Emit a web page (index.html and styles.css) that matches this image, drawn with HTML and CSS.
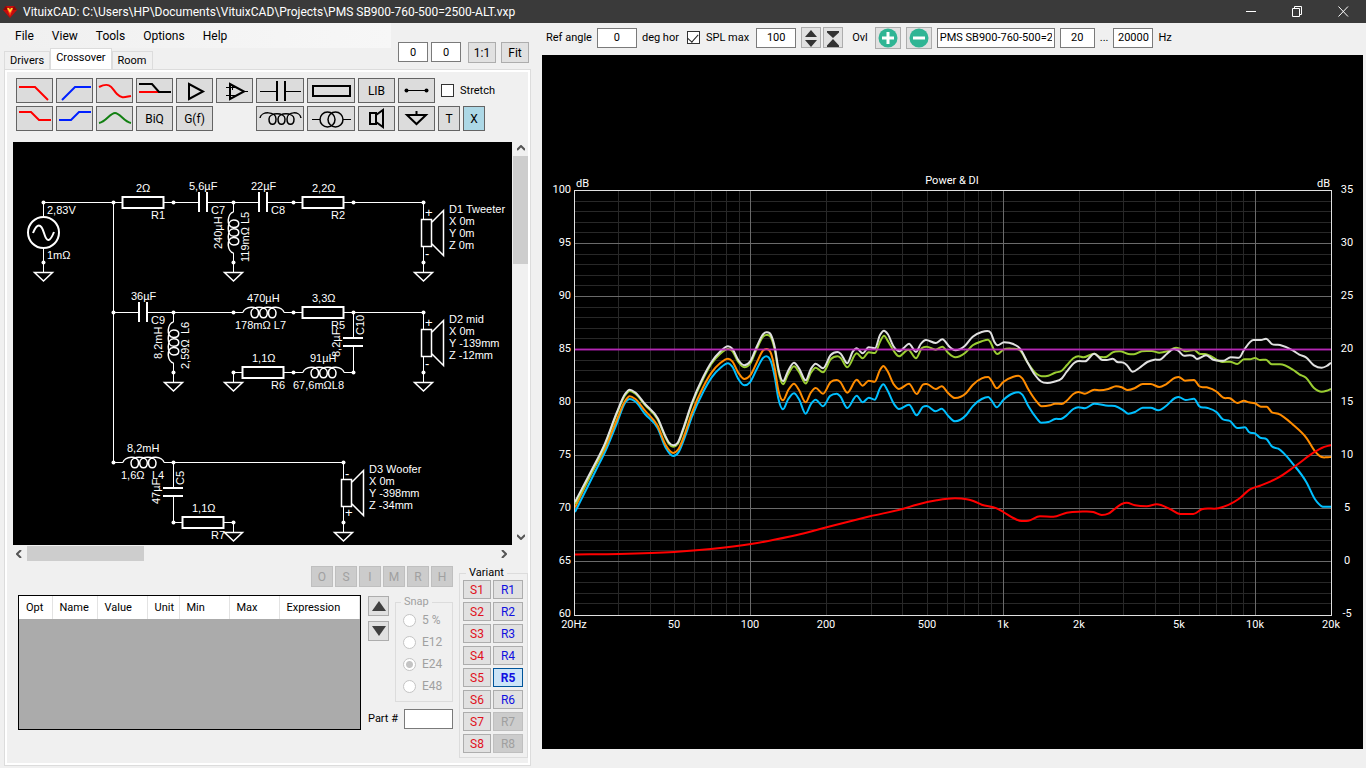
FILE: index.html
```html
<!DOCTYPE html>
<html lang="en">
<head>
<meta charset="utf-8">
<title>VituixCAD</title>
<link rel="stylesheet" href="styles.css">
</head>
<body>
<div class="app">
  <header class="titlebar">
    <svg class="logo" viewBox="0 0 14 12" aria-hidden="true">
      <path d="M3 0H11L14 4L7 12L0 4Z" fill="#c40c0c"/>
      <path d="M0 4L3 0L5 4ZM14 4L11 0L9 4Z" fill="#8d0505"/>
      <path d="M4 3H10L7 10Z" fill="#ff3b1f"/>
      <path d="M4 2H6L7 4L8 2H10L7 7Z" fill="#ffd92e"/>
    </svg>
    <h1 class="title">VituixCAD: C:\Users\HP\Documents\VituixCAD\Projects\PMS SB900-760-500=2500-ALT.vxp</h1>
    <div class="window-buttons">
      <button type="button" aria-label="Minimize"><svg viewBox="0 0 11 11"><path d="M0 5.5H10"/></svg></button>
      <button type="button" aria-label="Restore"><svg viewBox="0 0 11 11"><path d="M.5 2.5H7.5V10.500H.5ZM2.500 2.500V.5H9.500V8.500H7.500"/></svg></button>
      <button type="button" aria-label="Close"><svg viewBox="0 0 11 11"><path d="M.5 .5L10 10.500M10 .5L.5 10.500"/></svg></button>
    </div>
  </header>

  <div class="workspace">
    <section class="editor">
      <div class="editor-head">
        <div class="nav">
          <nav class="menu">
            <button type="button">File</button>
            <button type="button">View</button>
            <button type="button">Tools</button>
            <button type="button">Options</button>
            <button type="button">Help</button>
          </nav>
          <div class="tabs" role="tablist">
            <button type="button" role="tab" class="tab">Drivers</button>
            <button type="button" role="tab" class="tab active" aria-selected="true">Crossover</button>
            <button type="button" role="tab" class="tab">Room</button>
          </div>
        </div>
        <div class="view-tools">
          <div class="offsets">
            <input class="field offset" type="text" value="0" aria-label="Horizontal offset">
            <input class="field offset" type="text" value="0" aria-label="Vertical offset">
          </div>
          <div class="zooms">
            <button type="button" class="btn view-btn">1:1</button>
            <button type="button" class="btn view-btn">Fit</button>
          </div>
        </div>
      </div>

      <div class="panel">
        <div class="parts">
          <div class="parts-row">
            <button type="button" class="part" aria-label="Low pass"><svg viewBox="0 0 35 23"><path class="red" d="M2 8H18L31 21"/></svg></button>
            <button type="button" class="part" aria-label="High pass"><svg viewBox="0 0 35 23"><path class="blue" d="M5 21L18 8H34"/></svg></button>
            <button type="button" class="part" aria-label="All pass"><svg viewBox="0 0 35 23"><path class="red" d="M2 8C14 2 15 10 20 15C25 20 28 18 34 17"/></svg></button>
            <button type="button" class="part" aria-label="Shelf low pass"><svg viewBox="0 0 35 23"><path class="red" d="M2 13H23"/><path class="ink" d="M2 5H15L22 13H34"/></svg></button>
            <button type="button" class="part" aria-label="Buffer"><svg viewBox="0 0 35 23"><path class="ink" d="M12 5V20L26 12.500Z"/></svg></button>
            <button type="button" class="part" aria-label="Operational amplifier"><svg viewBox="0 0 35 23"><path class="ink" d="M13 5V20L27 12.500Z"/><path class="thin" d="M9 8.500H18M9 16.500H18M15.500 6V11M27 12.500H31"/></svg></button>
            <button type="button" class="part wide" aria-label="Capacitor"><svg viewBox="0 0 46 23"><path class="thin" d="M3 12.500H20M28 12.500H44"/><path class="ink" d="M20 2V22M28 2V22"/></svg></button>
            <button type="button" class="part wide" aria-label="Resistor"><svg viewBox="0 0 46 23"><path class="ink" d="M5 7H42V17H5Z"/></svg></button>
            <button type="button" class="part">LIB</button>
            <button type="button" class="part" aria-label="Wire"><svg viewBox="0 0 35 23"><path class="thin" d="M7 11.500H27"/><circle cx="7.500" cy="11.500" r="2"/><circle cx="27.500" cy="11.500" r="2"/></svg></button>
            <label class="check stretch"><input type="checkbox"> Stretch</label>
          </div>
          <div class="parts-row">
            <button type="button" class="part" aria-label="Low shelf"><svg viewBox="0 0 35 23"><path class="red" d="M2 5H14L22 13H34"/></svg></button>
            <button type="button" class="part" aria-label="High shelf"><svg viewBox="0 0 35 23"><path class="blue" d="M2 13H14L22 5H34"/></svg></button>
            <button type="button" class="part" aria-label="Peak"><svg viewBox="0 0 35 23"><path class="green" d="M2 16C9 15 13 6 18 6C23 6 27 15 34 16"/></svg></button>
            <button type="button" class="part">BiQ</button>
            <button type="button" class="part">G(f)</button>
            <span class="part-gap"></span>
            <button type="button" class="part wide" aria-label="Inductor"><svg viewBox="0 0 46 23"><path class="ink coil-icon" d="M3 11C4 4 19 4 19 12C19 19 12 19 12 12C12 5 28 5 28 12C28 19 21 19 21 12C21 5 37 5 37 12C37 19 30 19 30 12C30 4 43 4 44 11"/></svg></button>
            <button type="button" class="part wide" aria-label="Transformer"><svg viewBox="0 0 46 23"><path class="thin" d="M4 12.500H12M35 12.500H43"/><circle class="ring" cx="19.500" cy="12.500" r="7.500"/><circle class="ring" cx="27.500" cy="12.500" r="7.500"/></svg></button>
            <button type="button" class="part" aria-label="Loudspeaker"><svg viewBox="0 0 35 23"><path class="ink" d="M11 6H17V17H11ZM17 8L24 3V20L17 15"/></svg></button>
            <button type="button" class="part" aria-label="Ground"><svg viewBox="0 0 35 23"><path class="ink" d="M8 8H27L17.500 17ZM17.500 4V8"/></svg></button>
            <button type="button" class="part narrow">T</button>
            <button type="button" class="part narrow on">X</button>
          </div>
        </div>

        <div class="canvas-frame">
          <svg class="schematic" viewBox="13 142 499 403" role="img" aria-label="Crossover schematic">
            <defs>
              <g id="coil"><path class="symbol" d="M0 0C1 -6 15.500 -8 15.500 0C15.500 7 8 7 8 0C8 -7 24.300 -7 24.300 0C24.300 7 16.700 7 16.700 0C16.700 -7 33 -7 33 0C33 7 25.500 7 25.500 0C25.500 -8 40 -6 41 0"/></g>
              <g id="ground"><path d="M0 0V9.500"/><path class="symbol" d="M-9 10H9L0 18.500Z"/><circle r="2"/></g>
              <g id="resistor"><path class="bold" d="M0 -5.500H41V5.500H0Z"/></g>
              <g id="capacitor"><path class="bold" d="M0 -10V10M8 -10V10"/></g>
              <g id="driver"><path d="M0 0V17M0 44V60"/><path class="symbol" d="M-2 17H8V44H-2ZM8 20L20 8V53L8 41"/><circle r="2"/></g>
            </defs>
            <g class="wires">
              <path d="M43.500 217V202.500H122M164 202.500H199M207 202.500H259M267 202.500H302M344 202.500H423.500"/>
              <path d="M113.500 202.500V462.500H123M164 462.500H343.500"/>
              <path d="M43.500 248V262M233.500 202.500V212M233.500 253V262"/>
              <path d="M113.500 312.500H139M147 312.500H243M284 312.500H302M344 312.500H423.500"/>
              <path d="M173.500 312.500V322M173.500 363V372M353.500 312.500V338M353.500 346V372.500H344M303 372.500H284M243 372.500H233.500"/>
              <path d="M173.500 462.500V488M173.500 496V522.500H182M224 522.500H233.500"/>
              <circle class="bold" cx="43.500" cy="232.500" r="15.500"/>
              <path class="bold" d="M33 233C37 223 41 223 44 233S50 242 54 232"/>
              <use href="#coil" transform="translate(233.500 253) rotate(-90)"/>
              <use href="#coil" transform="translate(173.500 363) rotate(-90)"/>
              <use href="#coil" x="243" y="312.500"/>
              <use href="#coil" x="303" y="372.500"/>
              <use href="#coil" x="123" y="462.500"/>
              <use href="#resistor" x="122.500" y="202.500"/>
              <use href="#resistor" x="302.500" y="202.500"/>
              <use href="#resistor" x="302.500" y="312.500"/>
              <use href="#resistor" x="242.500" y="372.500"/>
              <use href="#resistor" x="182.500" y="522.500"/>
              <use href="#capacitor" x="199" y="202"/>
              <use href="#capacitor" x="259" y="202"/>
              <use href="#capacitor" x="139" y="312"/>
              <use href="#capacitor" transform="translate(353 338) rotate(90) scale(1 -1)"/>
              <use href="#capacitor" transform="translate(173 488) rotate(90) scale(1 -1)"/>
              <use href="#driver" x="423.500" y="202.500"/>
              <use href="#driver" x="423.500" y="312.500"/>
              <use href="#driver" x="343.500" y="462.500"/>
              <use href="#ground" x="43.500" y="262.500"/>
              <use href="#ground" x="233.500" y="262.500"/>
              <use href="#ground" x="173.500" y="372.500"/>
              <use href="#ground" x="233.500" y="372.500"/>
              <use href="#ground" x="423.500" y="262.500"/>
              <use href="#ground" x="423.500" y="372.500"/>
              <use href="#ground" x="233.500" y="522.500"/>
              <use href="#ground" x="343.500" y="522.500"/>
              <circle cx="43.500" cy="202.500" r="2"/><circle cx="113.500" cy="202.500" r="2"/>
              <circle cx="173.500" cy="202.500" r="2"/><circle cx="233.500" cy="202.500" r="2"/>
              <circle cx="293.500" cy="202.500" r="2"/><circle cx="353.500" cy="202.500" r="2"/>
              <circle cx="113.500" cy="312.500" r="2"/><circle cx="173.500" cy="312.500" r="2"/>
              <circle cx="233.500" cy="312.500" r="2"/><circle cx="293.500" cy="312.500" r="2"/>
              <circle cx="353.500" cy="312.500" r="2"/><circle cx="293.500" cy="372.500" r="2"/>
              <circle cx="353.500" cy="372.500" r="2"/><circle cx="113.500" cy="462.500" r="2"/>
              <circle cx="173.500" cy="462.500" r="2"/><circle cx="173.500" cy="522.500" r="2"/>
            </g>
            <g class="part-labels">
              <text x="47" y="214">2,83V</text><text x="47" y="259">1mΩ</text>
              <text x="136" y="192">2Ω</text><text x="151" y="219">R1</text>
              <text x="189" y="190">5,6µF</text><text x="211" y="214">C7</text>
              <text x="251" y="190">22µF</text><text x="271" y="214">C8</text>
              <text x="312" y="192">2,2Ω</text><text x="331" y="219">R2</text>
              <text x="131" y="300">36µF</text><text x="151" y="324">C9</text>
              <text x="247" y="302">470µH</text><text x="235" y="329">178mΩ L7</text>
              <text x="312" y="302">3,3Ω</text><text x="331" y="329">R5</text>
              <text x="252" y="362">1,1Ω</text><text x="271" y="389">R6</text>
              <text x="310" y="362">91µH</text><text x="293" y="389">67,6mΩL8</text>
              <text x="127" y="452">8,2mH</text><text x="121" y="479">1,6Ω</text><text x="152" y="479">L4</text>
              <text x="192" y="512">1,1Ω</text><text x="211" y="539">R7</text>
              <text class="sign" x="425" y="217">+</text><text class="sign" x="425" y="258">-</text>
              <text class="sign" x="425" y="327">+</text><text class="sign" x="425" y="368">-</text>
              <text class="sign" x="345" y="478">-</text><text class="sign" x="345" y="517">+</text>
              <text transform="translate(222 249) rotate(-90)">240µH</text>
              <text transform="translate(249 262) rotate(-90)">119mΩ L5</text>
              <text transform="translate(162 359) rotate(-90)">8,2mH</text>
              <text transform="translate(189 369) rotate(-90)">2,59Ω</text>
              <text transform="translate(189 334) rotate(-90)">L6</text>
              <text transform="translate(364 335) rotate(-90)">C10</text>
              <text transform="translate(340 357) rotate(-90)">8,2µF</text>
              <text transform="translate(184 485) rotate(-90)">C5</text>
              <text transform="translate(160 504) rotate(-90)">47µF</text>
              <text><tspan x="449" y="213">D1 Tweeter</tspan><tspan x="449" dy="12">X 0m</tspan><tspan x="449" dy="12">Y 0m</tspan><tspan x="449" dy="12">Z 0m</tspan></text>
              <text><tspan x="449" y="323">D2 mid</tspan><tspan x="449" dy="12">X 0m</tspan><tspan x="449" dy="12">Y -139mm</tspan><tspan x="449" dy="12">Z -12mm</tspan></text>
              <text><tspan x="369" y="473">D3 Woofer</tspan><tspan x="369" dy="12">X 0m</tspan><tspan x="369" dy="12">Y -398mm</tspan><tspan x="369" dy="12">Z -34mm</tspan></text>
            </g>
          </svg>
          <div class="scroll vertical">
            <svg viewBox="0 0 8 6"><path d="M0 5L4 1L8 5"/></svg>
            <span class="thumb"></span>
            <svg viewBox="0 0 8 6"><path d="M0 1L4 5L8 1"/></svg>
          </div>
          <div class="scroll horizontal">
            <svg viewBox="0 0 6 8"><path d="M5 0L1 4L5 8"/></svg>
            <span class="thumb"></span>
            <svg viewBox="0 0 6 8"><path d="M1 0L5 4L1 8"/></svg>
          </div>
        </div>

        <div class="details">
          <div class="details-main">
            <div class="modes">
              <button type="button" class="btn" disabled>O</button>
              <button type="button" class="btn" disabled>S</button>
              <button type="button" class="btn" disabled>I</button>
              <button type="button" class="btn" disabled>M</button>
              <button type="button" class="btn" disabled>R</button>
              <button type="button" class="btn" disabled>H</button>
            </div>
            <div class="values">
              <div class="table-wrap">
                <table>
                  <colgroup><col class="c-opt"><col class="c-name"><col class="c-value"><col class="c-unit"><col class="c-min"><col class="c-max"><col></colgroup>
                  <thead><tr><th>Opt</th><th>Name</th><th>Value</th><th>Unit</th><th>Min</th><th>Max</th><th>Expression</th></tr></thead>
                </table>
              </div>
              <div class="side">
                <div class="side-top">
                  <div class="arrows">
                    <button type="button" class="btn" aria-label="Move up"><svg viewBox="0 0 14 12"><path d="M0 11L7 1L14 11Z"/></svg></button>
                    <button type="button" class="btn" aria-label="Move down"><svg viewBox="0 0 14 12"><path d="M0 1L7 11L14 1Z"/></svg></button>
                  </div>
                  <fieldset class="snap" disabled>
                    <legend>Snap</legend>
                    <label><input type="radio" name="snap">5 %</label>
                    <label><input type="radio" name="snap">E12</label>
                    <label><input type="radio" name="snap" checked>E24</label>
                    <label><input type="radio" name="snap">E48</label>
                  </fieldset>
                </div>
                <div class="part-number">
                  <label for="partno">Part #</label>
                  <input id="partno" class="field" type="text">
                </div>
              </div>
            </div>
          </div>
          <fieldset class="variant">
            <legend>Variant</legend>
            <div class="variant-grid">
              <button type="button" class="btn s">S1</button><button type="button" class="btn r">R1</button>
              <button type="button" class="btn s">S2</button><button type="button" class="btn r">R2</button>
              <button type="button" class="btn s">S3</button><button type="button" class="btn r">R3</button>
              <button type="button" class="btn s">S4</button><button type="button" class="btn r">R4</button>
              <button type="button" class="btn s">S5</button><button type="button" class="btn r current">R5</button>
              <button type="button" class="btn s">S6</button><button type="button" class="btn r">R6</button>
              <button type="button" class="btn s">S7</button><button type="button" class="btn r" disabled>R7</button>
              <button type="button" class="btn s">S8</button><button type="button" class="btn r" disabled>R8</button>
            </div>
          </fieldset>
        </div>
      </div>
    </section>

    <section class="response">
      <div class="response-tools">
        <label for="angle">Ref angle</label>
        <input id="angle" class="field short" type="text" value="0">
        <span class="unit">deg hor</span>
        <label class="check spl"><input type="checkbox" checked> SPL max</label>
        <input class="field short" type="text" value="100" aria-label="SPL max value">
        <div class="pair">
          <button type="button" class="btn scale" aria-label="Expand scale"><svg viewBox="0 0 16 18"><path d="M2 8L8 1L14 8ZM2 11L8 18L14 11Z"/></svg></button>
          <button type="button" class="btn scale" aria-label="Compress scale"><svg viewBox="0 0 16 18"><path d="M2 2H14V3.500L8 9L2 3.500ZM2 16.500L8 10L14 16.500V18H2Z"/></svg></button>
        </div>
        <label for="overlay" class="ovl">Ovl</label>
        <button type="button" class="btn overlay" aria-label="Add overlay"><svg viewBox="0 0 20 20"><circle cx="10" cy="10" r="9.500"/><path d="M10 4V16M4 10H16"/></svg></button>
        <button type="button" class="btn overlay" aria-label="Remove overlay"><svg viewBox="0 0 20 20"><circle cx="10" cy="10" r="9.500"/><path d="M4 10H16"/></svg></button>
        <input id="overlay" class="field overlay-name" type="text" value="PMS SB900-760-500=2500-ALT">
        <input class="field fmin" type="text" value="20" aria-label="Minimum frequency">
        <span>...</span>
        <input id="fmax" class="field short" type="text" value="20000">
        <label for="fmax">Hz</label>
      </div>
      <div class="chart">
        <svg id="chart" viewBox="542 55 821 694" role="img" aria-label="Power and DI chart">
          <g id="grid"></g>
          <g id="curves"></g>
          <path class="target" d="M575 349.500H1331"/>
          <path class="axis-frame" d="M574.500 190.500H1331.500V615.500H574.500Z"/>
          <g id="labels">
            <text x="952" y="184" text-anchor="middle">Power &amp; DI</text>
            <text x="576" y="187">dB</text>
            <text x="1330" y="187" text-anchor="end">dB</text>
          </g>
        </svg>
      </div>
    </section>
  </div>
</div>
<script src="chart.js"></script>
</body>
</html>
```

FILE: styles.css
```css
* { box-sizing: border-box; }

body {
  margin: 0;
  background: #f0f0f0;
  color: #000;
  font: 11px/14px Roboto, "Liberation Sans", sans-serif;
}

button, input { font: inherit; color: inherit; }
button { padding: 0; }

.app {
  display: flex;
  flex-direction: column;
  min-height: 100vh;
}

/* Title bar */
.titlebar {
  display: flex;
  align-items: center;
  height: 23px;
  padding-left: 3px;
  background: #3a3a3a;
  color: #fff;
}
.logo { width: 14px; height: 12px; }
.title {
  flex: 1;
  margin: 0 0 0 6px;
  font-size: 12px;
  font-weight: 400;
  line-height: 16px;
  white-space: nowrap;
}
.window-buttons { display: flex; }
.window-buttons button {
  display: flex;
  align-items: center;
  justify-content: center;
  width: 46px;
  height: 22px;
  border: 0;
  background: none;
}
.window-buttons svg {
  width: 11px;
  height: 11px;
  fill: none;
  stroke: #fff;
}

.workspace {
  display: flex;
  flex: 1;
}

/* Common controls */
.field {
  height: 20px;
  padding: 0 2px;
  border: 1px solid #7a7a7a;
  border-radius: 0;
  background: #fff;
  text-align: center;
}
.btn {
  display: flex;
  align-items: center;
  justify-content: center;
  border: 1px solid #adadad;
  background: #e1e1e1;
  font-size: 12px;
}
.btn:disabled {
  border-color: #bfbfbf;
  background: #ccc;
  color: #a0a0a0;
}
.check {
  display: flex;
  align-items: center;
  gap: 6px;
}
.check input {
  appearance: none;
  display: grid;
  place-content: center;
  width: 13px;
  height: 13px;
  margin: 0;
  border: 1px solid #333;
  background: #fff;
}
.check input:checked::before {
  content: "";
  width: 9px;
  height: 5px;
  border: solid #222;
  border-width: 0 0 1px 1px;
  transform: translateY(-1px) rotate(-48deg);
}

/* Left side */
.editor {
  display: flex;
  flex-direction: column;
  flex: 0 0 535px;
  padding: 0 4px 2px;
}
.editor-head { display: flex; }
.nav {
  flex: 1;
  display: flex;
  flex-direction: column;
}
.menu {
  display: flex;
  gap: 18px;
  height: 25px;
  padding-left: 11px;
  background: linear-gradient(90deg, #f0f0f0, #f7f7f7);
}
.menu button {
  border: 0;
  background: none;
  font-size: 12px;
  line-height: 24px;
}
.tabs {
  display: flex;
  align-items: flex-end;
  height: 21px;
}
.tab {
  height: 18px;
  padding: 0 5px;
  border: 1px solid #dcdcdc;
  border-bottom: 0;
  background: #f0f0f0;
}
.tab.active {
  height: 21px;
  padding-bottom: 2px;
  background: #fff;
}
.view-tools {
  display: flex;
  align-items: flex-start;
  gap: 7px;
  padding: 19px 2px 0 7px;
}
.offsets, .zooms { display: flex; }
.offsets { gap: 3px; }
.zooms { gap: 5px; }
.offset { width: 30px; }
.view-btn {
  width: 28px;
  height: 21px;
}

.panel {
  display: flex;
  flex-direction: column;
  flex: 1;
  padding: 6px 0 0 6px;
  border: 1px solid #dcdcdc;
  outline: 2px solid #fff;
  outline-offset: -3px;
}

.parts {
  display: flex;
  flex-direction: column;
  gap: 3px;
  padding: 2px 0 0 5px;
}
.parts-row {
  display: flex;
  align-items: center;
  gap: 3px;
}
.part {
  width: 37px;
  height: 25px;
  border: 1px solid #646464;
  background: #dcdcdc;
  font-size: 12px;
}
.part.wide { width: 48px; }
.part.narrow { width: 22px; }
.part.on { background: #add8e6; }
.part-gap { width: 37px; }
.part svg {
  display: block;
  width: 100%;
  height: 23px;
}
.part path, .part .ring { fill: none; stroke-width: 2; }
.part .red { stroke: #f00; }
.part .blue { stroke: #0020ff; }
.part .green { stroke: #128012; }
.part .ink { stroke: #000; }
.part .coil-icon { stroke-width: 1.5; }
.part .thin { stroke: #000; stroke-width: 1; }
.part .ring { stroke: #000; stroke-width: 1.5; }
.stretch { padding-left: 3px; }

.canvas-frame {
  display: grid;
  grid-template-columns: 1fr 16px;
  margin: 11px 2px 0;
}
.schematic {
  display: block;
  width: 100%;
  background: #000;
}
.wires { fill: none; stroke: #fff; stroke-width: 1; }
.wires circle:not(.bold), #ground circle, #driver circle { fill: #fff; stroke: none; }
.bold { stroke-width: 2; }
.symbol { stroke-width: 1.5; }
.part-labels {
  fill: #fff;
  font: 11px "Liberation Sans", Arial, sans-serif;
}
.sign { font-size: 13px; }
.scroll {
  display: flex;
  align-items: center;
  justify-content: space-between;
}
.scroll svg {
  fill: none;
  stroke: #555;
  stroke-width: 2;
}
.scroll.vertical {
  flex-direction: column;
  padding: 3px 0 5px 1px;
}
.scroll.vertical svg { width: 8px; height: 6px; }
.scroll.vertical .thumb {
  width: 15px;
  height: 108px;
  margin: 5px 0 auto;
  background: #cdcdcd;
}
.scroll.horizontal {
  height: 16px;
  padding: 1px 5px 0 3px;
}
.scroll.horizontal svg { width: 6px; height: 8px; }
.scroll.horizontal .thumb {
  width: 117px;
  height: 15px;
  margin: 0 auto 0 5px;
  background: #cdcdcd;
}

.details {
  display: flex;
  gap: 6px;
  padding: 5px 2px 0 7px;
}
.details-main { flex: 1; }
.modes {
  display: flex;
  justify-content: flex-end;
  gap: 2px;
  margin-bottom: 8px;
}
.modes .btn {
  width: 22px;
  height: 21px;
}
.values {
  display: flex;
  gap: 7px;
}
.table-wrap {
  flex: 1;
  height: 135px;
  border: 1px solid #000;
  background: #ababab;
}
table {
  width: 100%;
  border-collapse: collapse;
  table-layout: fixed;
}
th {
  height: 23px;
  padding: 0 0 0 7px;
  border-right: 1px solid #e3e3e3;
  background: #fff;
  font-weight: 400;
  text-align: left;
}
.c-opt { width: 33px; }
.c-name { width: 45px; }
.c-value { width: 50px; }
.c-unit { width: 32px; }
.c-min, .c-max { width: 50px; }

.side-top {
  display: flex;
  gap: 6px;
}
.arrows {
  display: flex;
  flex-direction: column;
  gap: 5px;
  padding-top: 1px;
}
.arrows .btn {
  width: 21px;
  height: 20px;
}
.arrows svg {
  width: 14px;
  height: 12px;
  fill: #404040;
}
fieldset {
  min-width: 0;
  margin: 0;
  border: 1px solid #dcdcdc;
}
legend {
  margin-left: 3px;
  padding: 0 3px;
}
.snap {
  width: 58px;
  height: 107px;
  padding: 0 0 0 7px;
  color: #a0a0a0;
}
.snap legend { margin-left: -2px; }
.snap label {
  display: flex;
  align-items: center;
  gap: 6px;
  height: 22px;
  font-size: 12px;
}
.snap input {
  appearance: none;
  width: 13px;
  height: 13px;
  margin: 0;
  border: 1px solid #c4c4c4;
  border-radius: 50%;
  background: #fff;
}
.snap input:checked {
  background: radial-gradient(circle, #c4c4c4 3px, #fff 4px);
}
.part-number {
  display: flex;
  align-items: center;
  justify-content: space-between;
  margin-top: 7px;
}
.part-number .field { width: 49px; }

.variant {
  height: 192px;
  padding: 0 0 0 3px;
  width: 69px;
}
.variant-grid {
  display: grid;
  grid-template-columns: 28px 30px;
  gap: 3px 2px;
}
.variant .btn { height: 19px; }
.s { color: #e01020; }
.r { color: #1010e0; }
.current {
  border-color: #005499;
  background: #cce4f7;
  font-weight: 700;
}

/* Right side */
.response {
  flex: 1;
  display: flex;
  flex-direction: column;
  min-width: 0;
  padding: 0 3px 19px 7px;
}
.response-tools {
  display: flex;
  align-items: center;
  gap: 5px;
  height: 32px;
  padding: 0 0 3px 4px;
  white-space: nowrap;
}
.short { width: 40px; }
.spl { padding: 0 2px 0 3px; }
.pair { display: flex; gap: 2px; }
.scale { width: 20px; height: 21px; }
.scale svg { width: 16px; height: 18px; fill: #333; }
.ovl { padding: 0 2px 0 4px; }
.overlay { width: 26px; height: 22px; }
.overlay svg { width: 20px; height: 20px; }
.overlay circle { fill: #2fb594; }
.overlay path { fill: none; stroke: #fff; stroke-width: 3; }
.overlay-name { width: 118px; text-align: left; }
.fmin { width: 35px; }

.chart {
  flex: 1;
  display: flex;
  min-height: 0;
  background: #000;
}
.chart svg { width: 100%; }
#labels {
  fill: #fff;
  font: 11px Roboto, "Liberation Sans", sans-serif;
}
.minor { stroke: #282828; }
.major { stroke: #6a6a6a; }
#grid, .axis-frame { shape-rendering: crispEdges; }
.axis-frame { fill: none; stroke: #e0e0e0; }
.target { stroke: #c020c0; stroke-width: 2; opacity: .85; }
.curve { fill: none; stroke-width: 2; stroke-linejoin: round; }
.di { stroke: #f00; }
.axial { stroke: #e0e0e0; }
.window { stroke: #9acd32; }
.early { stroke: #ff8c00; }
.power { stroke: #00bfff; }
```

FILE: chart.js
```js
const SVG_NS = "http://www.w3.org/2000/svg";
const plot = { left: 574.5, right: 1331.5, top: 190.5, bottom: 614.5 };

function add(parent, name, attrs, text) {
  const node = document.createElementNS(SVG_NS, name);
  for (const key in attrs) node.setAttribute(key, attrs[key]);
  if (text) node.textContent = text;
  parent.appendChild(node);
}

const freqX = f => plot.left + (plot.right - plot.left) * Math.log10(f / 20) / 3;
const levelY = db => plot.bottom - (plot.bottom - plot.top) * (db - 60) / 40;

// Grid: minor lines first so that the major ones stay on top.
const grid = document.getElementById("grid");
const lines = [];
for (let db = 61; db < 100; db++) {
  const y = Math.floor(levelY(db)) + 0.5;
  lines.push([db % 5 === 0, `M${plot.left} ${y}H${plot.right}`]);
}
for (const decade of [10, 100, 1000, 10000]) {
  for (let k = 1; k < 10; k++) {
    const f = decade * k;
    if (f <= 20 || f >= 20000) continue;
    lines.push([k === 1, `M${Math.floor(freqX(f)) + 0.5} ${plot.top}V${plot.bottom}`]);
  }
}
lines.sort((a, b) => a[0] - b[0]);
for (const [major, d] of lines) add(grid, "path", { class: major ? "major" : "minor", d });

// Axis labels
const labels = document.getElementById("labels");
for (let i = 0; i <= 8; i++) {
  const y = Math.round(levelY(100 - 5 * i)) + 2;
  add(labels, "text", { x: 571, y, "text-anchor": "end" }, String(100 - 5 * i));
  add(labels, "text", { x: 1347, y, "text-anchor": "middle" }, String(35 - 5 * i));
}
for (const [f, name] of [[20, "20Hz"], [50, "50"], [100, "100"], [200, "200"], [500, "500"],
  [1000, "1k"], [2000, "2k"], [5000, "5k"], [10000, "10k"], [20000, "20k"]]) {
  add(labels, "text", { x: Math.floor(freqX(f)), y: 628, "text-anchor": "middle" }, name);
}

const series = {
  power: `575,512 596,470 605,452 617,423 625,403 629.7,399 635,401.3 645,414 657.7,428.3 665.7,447.7 673.3,456 678.3,452.7 685,436.7 691.7,417.3 703.3,391.7 711.7,377.3 720,368.3 728,363.3 732.3,366.7 738.3,379 744.3,385.3 750,382.3 756.7,369.3 763.3,357.7 766.3,356.3 771,361.7 775,378.3 778.3,398.3 783,409.3 788.3,399 794,393.3 799,399.3 805.7,413.7 810.7,404.3 815.7,399.7 823,406.3 830,396 836.7,393.7 840,396 847.3,408 856.7,395.7 862.7,402.3 868.7,397.7 874.7,399.7 880,388.3 883.3,384.3 887.3,390 894,404 899,409 909,404.7 916.7,415.3 922.7,407 926.7,406 935.7,411.3 941.7,408.7 948.3,416 955,421.3 966,415.3 972.7,406.3 981.7,399 988.3,397 991.7,400.7 996.7,407.3 1003.3,400 1013.3,393.3 1018.3,392.3 1022.3,394.7 1028.3,406 1036.7,418.3 1041,422.7 1048.3,422 1055,419 1061.7,418.7 1066.7,415.3 1073.3,409 1078.3,407.3 1085,408.3 1094.3,403.7 1108.3,405.7 1115,406 1123.3,410.3 1128.3,413.7 1135,412 1142.7,407.7 1150.7,407.7 1158.3,410.3 1166,406 1175,398 1178.7,397 1185.7,400 1194,398.7 1199.3,406.3 1206.7,407.7 1216.7,412.3 1222.7,419.3 1230,421 1237.3,428 1245,427.3 1249.3,432.3 1255,433.3 1260,437.7 1266.7,439.3 1271.7,446.3 1278.3,448.7 1293.3,464.3 1306.7,482.7 1315,499.3 1321.7,506.3 1326.7,506.7 1331,506.7`,
  early: `575,507.5 593.3,470 605,448.3 616.7,420 625,401 629.7,396.3 635,398.7 645,410.7 657.7,426 665.7,445 673.3,453 678.3,449.3 685,433.3 691.7,413.3 703.3,386.7 711.7,372.3 720,363.3 728,358.7 732.3,361.3 738.3,372.7 744.3,379 750,375.7 756.7,362.7 763.3,350.3 766.3,349 771,353.3 775,370 778.3,390 783,400.3 788.3,390 794,383.7 799,390 805.7,402.3 810.7,392.7 815.7,388 823,393.7 830.7,382 836.7,380 840,381.7 847.3,392.7 856.7,379.7 862.7,385.7 868.7,380.7 874.7,381.7 880,370 883.3,366 887.3,370.7 894,384.7 899,389 909,383.7 916.7,394 922.7,384.7 926.7,384 935.7,389 941.7,386.3 948.3,393.3 955,398 966,393.3 972.7,385 981.7,378.3 988.3,377 991.7,381 996.7,388.3 1003.3,382 1013.3,376.7 1018.3,375.7 1022.3,378.3 1028.3,389.3 1036.7,401.7 1041.7,406.3 1050,405.3 1055,403.7 1061.7,404 1066.7,400.7 1073.3,394 1078.3,392 1085,393.7 1094.3,389.7 1100,390.3 1108.3,389 1116,386.3 1121.7,387.3 1127.7,390 1135,388 1142.7,384 1150.7,384 1159.3,387 1166,384.3 1175,377.7 1178.7,377 1185,380.7 1194,380 1199.3,386.3 1206.7,387.3 1216.7,391.7 1223.3,397.7 1230,398.3 1237.3,403 1244,400.7 1248.7,402.3 1255,403.3 1261,406.7 1266.7,406.7 1271.7,412.3 1278.3,413.7 1293.3,425 1306.7,438.3 1315,451.3 1321.7,457 1326.7,457.3 1331,457`,
  window: `575,504 592,472 605,445 616.7,414 625,395.5 629.7,391 635,393.5 645,405 657.7,419.5 665.7,438 669,444 673.3,446.8 677.7,444 683.3,430 691.7,405 703.3,378.5 711.7,363.5 720,354 728,349 732.3,351 738.3,362 744.3,367.3 750,364 756.7,349 763.3,336.5 766.3,335 771,337.5 775,351 778.3,371 783,384.3 787.7,375 794,366.3 799,372 805.7,383.5 810.7,373 815.7,367.7 823,372.3 830.7,359.3 837.5,356.3 840.7,358 847.3,367.3 856.7,353.3 862.7,358.3 868.7,352.3 875,353 880,341.7 884,335.7 888.3,341.7 894.3,351.7 899,356.3 908.3,349.7 916,358.3 921.7,348.3 926.7,346.7 935.7,349.7 942.3,346.7 948.3,353 955.3,357.3 965,353 972.7,345.3 981.7,341.3 988,339.7 990.7,342.7 994.3,350.7 997.3,354 1003.3,349.7 1013.3,348.7 1020,350.3 1027.7,362.7 1036.7,374 1041.7,376.3 1048.3,375.7 1055,372.7 1061.7,370.7 1067,365 1073.3,358.3 1078.3,356.3 1083.3,357.3 1094.3,353.7 1100,357 1106.7,356.7 1112.7,352.3 1120,351.3 1128.3,354 1134,354.3 1141.7,351.3 1151.7,351 1159.3,352.7 1167.3,351.3 1176,347.7 1180,348.7 1186,351.3 1194.3,350 1200,354 1205,354 1211.7,356.7 1222.3,362 1230,361.7 1237.3,364 1244,359.3 1250,359.3 1255,358 1260,360 1266,359.7 1271.7,364.3 1280,364.3 1293.3,370 1299.3,374.3 1306,377.7 1314,388 1321.7,391.7 1326.7,390.7 1331,389`,
  axial: `575,502 591.7,470 605,443.3 616.7,412.7 625,394 629.7,389.7 635,392.3 645,404 657.7,418.3 665.7,436.7 669,442.7 673.3,445.3 677.7,442.7 683.3,428.3 691.7,403.3 703.3,376.7 711.7,361.7 720,351.7 728,346.3 732.3,348.7 738.3,360 744.3,365.3 750,361.7 756.7,346.7 763.3,334 766.3,332.3 771,335 775,348.3 778.3,368.3 783,381.3 787.7,371.7 794,362.7 799,368.3 805.7,380.3 810.7,369.3 815.7,363.7 823,368.3 830.7,355 837.5,352 840.7,353.7 847.3,363.3 852.7,351.7 856.7,348.3 862.7,353.3 868.7,347.3 875,348.3 880,335 884,330.7 887.7,334 893.3,346 899.7,351.3 904,347.7 909,343.7 916,352 920.7,344 926,340 935.7,343 942.3,339.3 950,347.3 955.3,350.3 965,345.7 972.7,336.7 981.7,332 987.3,331 990.7,332.7 994.3,341.7 997.7,345.3 1004,342.3 1013.3,344 1020,348.7 1027.7,362.7 1035,375 1040.7,381.3 1047.3,383 1054,381.7 1061.7,378.5 1066.7,371.7 1075,362.3 1079.3,361 1085,361.3 1094.3,353.7 1101.7,359.7 1106.7,360 1112.7,358.7 1117.3,362 1123.3,362.7 1126.7,365 1132.7,371.7 1139.3,368 1147.3,362 1154.3,359.7 1160.7,359.3 1166.7,354 1174,349 1178.3,350.7 1184,355.7 1190,355.3 1193.3,356 1197,359 1206,355.3 1213.3,359.7 1223.3,360.7 1230.7,357.3 1239,357.7 1244,350 1253.3,340 1261,340 1266,338.7 1271.7,344 1280,345 1293.3,350.7 1299.3,354.7 1306,357.3 1314,365.3 1321.7,367.7 1326.7,366 1331,362.7`,
  di: `575,554.5 619,554 674,552 711,549 751,544 790,536.5 800,534.3 826.7,527.3 848.3,521.7 870,516.3 903.3,508.7 916.7,504.7 936.7,500.3 955,498.3 966.7,499.3 973.3,501 981.7,504.7 996.7,508.3 1003.3,512 1013.3,518 1021.7,521 1028.3,520.7 1040,516.3 1053.3,516.7 1066.7,512.7 1078.3,511.7 1093.3,512 1101.7,515 1108.3,513.7 1115,508.7 1121.7,504 1126.7,502.7 1135,505.3 1146.7,506.3 1156.7,504.3 1170,509 1180,514 1193.3,514 1201.7,509.3 1218.3,508.3 1238.3,499.3 1250,489.3 1260,485.7 1278.3,477.7 1295,466.3 1315,451.7 1321.7,448 1331,445`
};

// Tangent at point i: flat at a peak or dip, otherwise the neighbouring
// slopes weighted by their spacing.
function tangent(points, i) {
  const slope = (p, q) => (q[1] - p[1]) / (q[0] - p[0]);
  if (i === 0) return slope(points[0], points[1]);
  if (i === points.length - 1) return slope(points[i - 1], points[i]);
  const [a, b, c] = [points[i - 1], points[i], points[i + 1]];
  const left = slope(a, b), right = slope(b, c);
  if (left * right <= 0) return 0;
  const hl = b[0] - a[0], hr = c[0] - b[0];
  return (left * hr + right * hl) / (hl + hr);
}

function smooth(points) {
  let d = `M${points[0]}`;
  for (let i = 0; i < points.length - 1; i++) {
    const a = points[i], b = points[i + 1];
    const step = (b[0] - a[0]) / 3;
    d += `C${a[0] + step} ${a[1] + tangent(points, i) * step} ${b[0] - step} ${b[1] - tangent(points, i + 1) * step} ${b[0]} ${b[1]}`;
  }
  return d;
}

const curves = document.getElementById("curves");
for (const name in series) {
  const points = series[name].split(" ").map(p => p.split(",").map(Number));
  add(curves, "path", { class: `curve ${name}`, d: smooth(points) });
}
```
